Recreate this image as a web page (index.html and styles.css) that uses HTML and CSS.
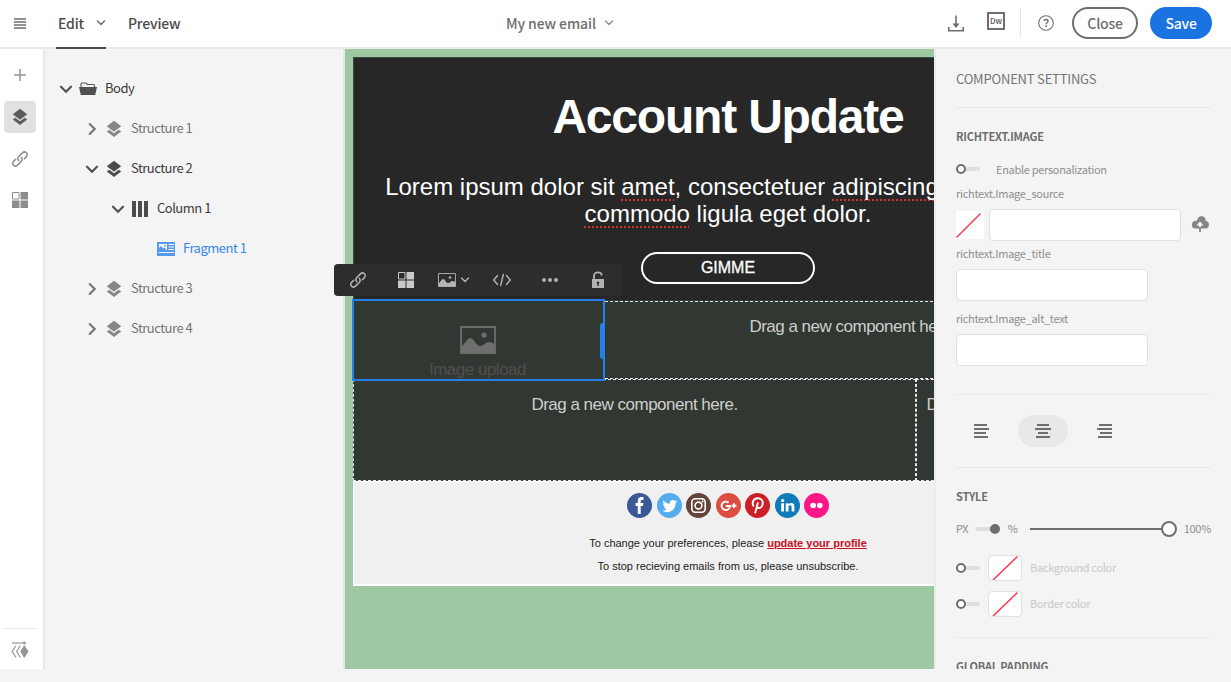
FILE: index.html
```html
<!DOCTYPE html>
<html lang="en">
<head>
<meta charset="utf-8">
<title>My new email</title>
<link rel="stylesheet" href="styles.css">
</head>
<body>
<svg class="defs" aria-hidden="true">
  <symbol id="layers" viewBox="0 0 16 18"><path d="M8 0.8 15.2 6.3 8 11.8 0.8 6.3zM8 13.3 12.8 9.7 15.2 11.6 8 17 0.8 11.6 3.2 9.7z"/></symbol>
  <symbol id="down" viewBox="0 0 14 14"><path d="M2 4.700 7 9.700l5-5" fill="none" stroke="currentColor" stroke-width="2.200" stroke-linecap="round"/></symbol>
  <symbol id="right" viewBox="0 0 14 14"><path d="M4.700 2 9.700 7l-5 5" fill="none" stroke="currentColor" stroke-width="2.100" stroke-linecap="round"/></symbol>
  <symbol id="link" viewBox="0 0 18 18"><g fill="none" stroke="currentColor" stroke-width="1.500" stroke-linecap="round"><path d="M7.800 10.800C6.200 9 6.500 7.800 7.800 6.500L11.200 3.100C12.600 1.700 14.400 1.700 15.500 2.800S16.500 5.600 15.200 6.900L13.300 8.800"/><path d="M10.200 7.200C11.800 9 11.500 10.200 10.200 11.500L6.800 14.900C5.400 16.300 3.600 16.300 2.500 15.200S1.500 12.400 2.800 11.100L4.700 9.200"/></g></symbol>
  <symbol id="grid" viewBox="0 0 18 18"><path d="M9.500 1H17v7.500H9.500zM1 9.500h7.500V17H1zM9.500 9.500H17V17H9.500z"/><path d="M1.500 1.500h6.500v6.500h-6.500z" fill="none" stroke="currentColor"/></symbol>
  <symbol id="picture" viewBox="0 0 36 28"><path d="M1 1h34v26H1z" fill="none" stroke="currentColor" stroke-width="1.800" stroke-linejoin="round"/><path d="M1 21C5 18 7 12 10.500 12S16 20 20 20s5-4 9-4 4 2 6 2v9H1z"/><circle cx="24" cy="9" r="2.600"/></symbol>
</svg>

<header class="topbar">
  <svg class="menu-icon" viewBox="0 0 12 11"><path d="M0 1h12M0 4h12M0 7h12M0 10h12" stroke="#6e6e6e" stroke-width="1.600"/></svg>
  <div class="tab tab-active"><span>Edit</span><svg viewBox="0 0 10 10"><path d="M1.500 3 5 6.500 8.500 3" fill="none" stroke="#6e6e6e" stroke-width="1.500" stroke-linecap="round"/></svg></div>
  <div class="tab">Preview</div>
  <div class="doc-title"><span>My new email</span><svg viewBox="0 0 10 10"><path d="M1.500 3 5 6.500 8.500 3" fill="none" stroke="#8e8e8e" stroke-width="1.400" stroke-linecap="round"/></svg></div>
  <svg class="download" viewBox="0 0 16 17"><path d="M8 .5v10M.8 12v3.800h14.400V12" fill="none" stroke="#6e6e6e" stroke-width="1.600"/><path d="M4.500 8.500h7L8 13z" fill="#6e6e6e"/></svg>
  <div class="dw">Dw</div>
  <div class="separator"></div>
  <svg class="help" viewBox="0 0 16 16"><circle cx="8" cy="8" r="7.300" fill="none" stroke="#6e6e6e" stroke-width="1.100"/><path d="M5.900 6.200C6.100 5 7 4.500 8 4.500c1.200 0 2 .7 2 1.700 0 1.500-1.900 1.500-1.900 3" fill="none" stroke="#6e6e6e" stroke-width="1.400"/><circle cx="8.100" cy="11.200" r=".95" fill="#6e6e6e"/></svg>
  <div class="button">Close</div>
  <div class="button button-primary">Save</div>
</header>

<main class="workspace">
  <nav class="rail">
    <div class="rail-item"><svg viewBox="0 0 18 18"><path d="M9 3v12M3 9h12" stroke="#959595" stroke-width="1.500"/></svg></div>
    <div class="rail-item rail-active"><svg viewBox="0 0 16 18"><use href="#layers"/></svg></div>
    <div class="rail-item"><svg><use href="#link"/></svg></div>
    <div class="rail-item rail-grid"><svg><use href="#grid"/></svg></div>
    <div class="rail-bottom"><svg viewBox="0 0 18 18"><path d="M1 2h12" stroke="#959595" stroke-width="1.200"/><path d="M12.500 0l3 2-3 2zM13.300 4 17.500 10.500 13.300 17 9.300 10.500z"/><path d="M5 4.500 1.200 10.500 5 16.500M9.300 4.500 5.700 10.500 9.300 16.500" fill="none" stroke="#959595" stroke-width="1.200"/></svg></div>
  </nav>

  <aside class="tree">
    <div class="node"><svg class="chev"><use href="#down"/></svg><svg class="folder" viewBox="0 0 18 14"><path d="M2 5V2q0-1 1-1h4l1.500 1.500h6q1 0 1 1V5" fill="none" stroke="#555" stroke-width="1.100"/><path d="M0 5h18l-1.800 8H1.800z" fill="#505050"/></svg><span>Body</span></div>
    <div class="node level-1 muted"><svg class="chev"><use href="#right"/></svg><svg class="icon"><use href="#layers"/></svg><span>Structure 1</span></div>
    <div class="node level-1"><svg class="chev"><use href="#down"/></svg><svg class="icon"><use href="#layers"/></svg><span>Structure 2</span></div>
    <div class="node level-2"><svg class="chev"><use href="#down"/></svg><svg class="icon" viewBox="0 0 16 18"><path d="M0 1h4v16H0zM6 1h4v16H6zM12 1h4v16h-4z"/></svg><span>Column 1</span></div>
    <div class="node level-3"><svg class="fragment" viewBox="0 0 18 14"><path d="M0 0h18v14H0z" fill="#569bee"/><path d="M2 2h8v6H2zM11.500 2H17v1h-5.500zM11.500 4.500H17v1h-5.500zM11.500 7H17v1h-5.500zM2 10h15v1H2z" fill="#f4f4f4"/><path d="M2 8V6l2-2 2 2.500 1-1 2 1.500v1z" fill="#569bee"/><circle cx="8" cy="3.800" r=".9" fill="#569bee"/></svg><span>Fragment 1</span></div>
    <div class="node level-1 muted"><svg class="chev"><use href="#right"/></svg><svg class="icon"><use href="#layers"/></svg><span>Structure 3</span></div>
    <div class="node level-1 muted"><svg class="chev"><use href="#right"/></svg><svg class="icon"><use href="#layers"/></svg><span>Structure 4</span></div>
  </aside>

  <section class="canvas">
    <div class="email">
      <div class="hero">
        <h1>Account Update</h1>
        <p><span class="line">Lorem ipsum dolor sit <u>amet</u>, consectetuer <u>adipiscing</u> elit. Aenean</span><br><u>commodo</u> ligula eget dolor.</p>
        <div class="cta">GIMME</div>
      </div>
      <div class="row row-first">
        <div class="cell selected"><svg><use href="#picture"/></svg><span>Image upload</span><div class="handle"></div></div>
        <div class="cell drop">Drag a new component here.</div>
      </div>
      <div class="row row-second">
        <div class="cell drop wide">Drag a new component here.</div>
        <div class="cell drop">Drag a new component<br>here.</div>
      </div>
      <footer class="footer">
        <div class="social">
          <svg viewBox="0 0 25 25"><circle cx="12.500" cy="12.500" r="12.500" fill="#3b5998"/><path d="M10.800 21v-8H8.500v-3.100h2.300V7.800c0-2.600 1.500-3.800 3.700-3.800l2 .1v2.800h-1.400c-1.100 0-1.400.5-1.400 1.300v1.700h2.700l-.4 3.100h-2.300v8z" fill="#fff"/></svg>
          <svg viewBox="0 0 25 25"><circle cx="12.500" cy="12.500" r="12.500" fill="#55acee"/><path d="M5.500 17.600c2 .1 3.300-.4 4.500-1.300-1.500-.1-2.400-1-2.800-2.100h1.300c-1.500-.4-2.400-1.600-2.400-3l1.300.4c-1.400-1.100-1.600-2.600-.8-4 1.700 2 3.600 3 6.200 3.200-.4-2.200 1-3.700 2.900-3.700.9 0 1.600.4 2.200 1l1.800-.7c-.2.700-.6 1.200-1.200 1.600l1.600-.4-1.500 1.500c.1 5.500-4 9.100-8.400 9.100-1.800 0-3.500-.7-4.700-1.600z" fill="#fff"/></svg>
          <svg viewBox="0 0 25 25"><circle cx="12.500" cy="12.500" r="12.500" fill="#64443a"/><g fill="none" stroke="#fff" stroke-width="1.600"><rect x="5.800" y="5.800" width="13.400" height="13.400" rx="3.500"/><circle cx="12.500" cy="12.500" r="3.400"/></g><circle cx="16.600" cy="8.500" r=".9" fill="#fff"/></svg>
          <svg viewBox="0 0 25 25"><circle cx="12.500" cy="12.500" r="12.500" fill="#dc4e41"/><path d="M12.600 9.700A4.200 4.200 0 1 0 14 13H9.800M15.600 12.700h4.800M18 10.300v4.800" fill="none" stroke="#fff" stroke-width="1.900"/></svg>
          <svg viewBox="0 0 25 25"><circle cx="12.500" cy="12.500" r="12.500" fill="#cb2027"/><path d="M8.700 13.400C6.300 9.500 8.500 5.300 12.800 5.300c3.100 0 5 2 5 4.500 0 3.100-1.700 5.200-4 5.200-1.300 0-2-.6-2.300-1.400M13 9.300 10.100 20.300" fill="none" stroke="#fff" stroke-width="1.900"/></svg>
          <svg viewBox="0 0 25 25"><circle cx="12.500" cy="12.500" r="12.500" fill="#0f7bb9"/><circle cx="7.600" cy="7.600" r="1.600" fill="#fff"/><path d="M6.200 10.200H9v8.300H6.200zM10.700 10.200h2.700v1.200c.5-.9 1.400-1.500 2.700-1.500 2.500 0 3.300 1.600 3.300 4.100v4.500h-2.800v-4c0-1.200-.2-2.200-1.400-2.200s-1.700.9-1.700 2.200v4h-2.800z" fill="#fff"/></svg>
          <svg viewBox="0 0 25 25"><circle cx="12.500" cy="12.500" r="12.500" fill="#ff1588"/><circle cx="9.200" cy="12.500" r="2.800" fill="#fff"/><circle cx="15.800" cy="12.500" r="2.800" fill="#fff"/></svg>
        </div>
        <p class="note-a">To change your preferences, please <a>update your profile</a></p>
        <p class="note-b">To stop recieving emails from us, please unsubscribe.</p>
      </footer>
    </div>
  </section>

  <aside class="settings">
    <h2>COMPONENT SETTINGS</h2>
    <section class="image-settings">
      <h3>RICHTEXT.IMAGE</h3>
      <div class="personalization"><i class="toggle"></i><span>Enable personalization</span></div>
      <label>richtext.Image_source</label>
      <div class="source"><svg class="swatch" viewBox="0 0 28 28"><path d="M.5 26.500 24.500 2.500" stroke="#f8384d" stroke-width="1.500"/></svg><div class="input"></div><svg class="cloud" viewBox="0 0 18 16"><path d="M4 12.500a3.800 3.800 0 0 1-.4-7.400C4.500 4.600 5.200 4.700 6 4.900 6.300 2 8 .3 10.400.3c2.700 0 4.500 2 4.300 4.800 1.900 0 3.300 1.600 3.300 3.600s-1.400 3.800-3.500 3.800z"/><path d="M9 5.300 12.500 9.500H10v3H8v-3H5.500z" fill="#f4f4f4"/><path d="M9 16v-5" stroke="#858585" stroke-width="1.800"/></svg></div>
      <label>richtext.Image_title</label>
      <div class="input"></div>
      <label class="alt">richtext.Image_alt_text</label>
      <div class="input"></div>
    </section>
    <section class="align">
      <div><svg viewBox="0 0 16 14"><path d="M0 1h13M0 5h15M0 9h12M0 13h14"/></svg></div>
      <div class="chosen"><svg viewBox="0 0 16 14"><path d="M2 1h12M0 5h16M3 9h10M1 13h14"/></svg></div>
      <div><svg viewBox="0 0 16 14"><path d="M2 1h13M0 5h15M3 9h12M1 13h14"/></svg></div>
    </section>
    <section class="style-settings">
      <h3>STYLE</h3>
      <div class="width-row"><span class="px">PX</span><i class="toggle toggle-on"></i><span class="pct">%</span><div class="slider"><i></i></div><span class="value">100%</span></div>
      <div class="color-row"><i class="toggle"></i><svg class="well" viewBox="0 0 32 24"><path d="M4 24 28.500 .5" stroke="#f8384d" stroke-width="1.500"/></svg><span>Background color</span></div>
      <div class="color-row"><i class="toggle"></i><svg class="well" viewBox="0 0 32 24"><path d="M4 24 28.500 .5" stroke="#f8384d" stroke-width="1.500"/></svg><span>Border color</span></div>
    </section>
    <section class="padding-settings"><h3>GLOBAL PADDING</h3></section>
  </aside>

  <div class="toolbar">
    <div><svg><use href="#link"/></svg></div>
    <div class="bright"><svg><use href="#grid"/></svg></div>
    <div class="image-tool"><svg viewBox="0 0 36 28"><use href="#picture"/></svg><svg class="mini" viewBox="0 0 10 10"><path d="M1.500 3 5 6.500 8.500 3" fill="none" stroke="#b3b3b3" stroke-width="1.400" stroke-linecap="round"/></svg></div>
    <div><svg viewBox="0 0 18 18"><path d="M4.500 4.500.8 9l3.700 4.500M13.500 4.500 17.200 9l-3.700 4.500M10.300 3.500 7.700 14.500" fill="none" stroke="#b3b3b3" stroke-width="1.400" stroke-linecap="round"/></svg></div>
    <div><svg viewBox="0 0 18 18"><circle cx="3" cy="9" r="2"/><circle cx="9" cy="9" r="2"/><circle cx="15" cy="9" r="2"/></svg></div>
    <div><svg viewBox="0 0 18 18"><path d="M3 8h12v9H3z"/><path d="M5 8V5C5 2.800 6.500 1.300 8.800 1.300S12.600 2.800 12.600 4.600" fill="none" stroke="#b3b3b3" stroke-width="1.800"/><path d="M9 12.500v2.500" stroke="#2d2d2d" stroke-width="1.300"/><circle cx="9" cy="11.800" r="1.300" fill="#2d2d2d"/></svg></div>
  </div>
</main>
</body>
</html>
```
FILE: styles.css
```css
*, *::before, *::after { box-sizing: border-box; }
body { margin: 0; width: 1231px; height: 682px; overflow: hidden; background: #f4f4f4; font-family: "Noto Sans CJK SC", "Open Sans", sans-serif; color: #4b4b4b; }
svg { display: block; flex: none; fill: currentColor; }
.defs { position: absolute; width: 0; height: 0; }
h1, h2, h3, p { margin: 0; }
span { white-space: nowrap; }

.topbar { height: 49px; border-bottom: 2px solid #eaeaea; background: #fff; display: flex; align-items: flex-start; font-size: 14px; font-weight: 500; line-height: 46px; letter-spacing: -.2px; }
.menu-icon { width: 12px; height: 11px; margin: 18px 36px 0 14px; }
.tab { height: 49px; margin-left: 17px; }
.tab-active { width: 50px; margin-left: -6px; padding-left: 2px; display: flex; justify-content: space-between; border-bottom: 2px solid #4b4b4b; }
.tab-active + .tab { margin-left: 22px; width: 53px; }
.tab svg { width: 10px; height: 10px; margin-top: 18px; }
.doc-title { margin-left: 325px; width: 108px; display: flex; justify-content: space-between; color: #6e6e6e; letter-spacing: -.1px; }
.doc-title svg { width: 10px; height: 10px; margin-top: 18px; }
.download { width: 16px; height: 17px; margin: 15px 0 0 334px; }
.dw { width: 18px; height: 18px; margin: 12px 0 0 23px; border: 2px solid #6e6e6e; font-size: 8px; line-height: 14px; text-align: center; color: #555; }
.separator { width: 1px; height: 28px; margin: 9px 17px 0 15px; background: #e4e4e4; }
.help { width: 16px; height: 16px; margin-top: 15px; }
.button { width: 66px; height: 32px; margin: 7px 0 0 18px; border: 2px solid #6e6e6e; border-radius: 16px; line-height: 28px; text-align: center; color: #6e6e6e; }
.button-primary { width: 62px; margin-left: 12px; border-color: #1b73e2; background: #1b73e2; color: #fff; }

.workspace { position: relative; display: flex; height: 620px; }
.rail { width: 45px; padding: 10px 0 0 4px; display: flex; flex-direction: column; gap: 10px; background: #fff; border-right: 2px solid #e8e8e8; color: #8e8e8e; }
.rail-item { width: 32px; height: 32px; padding: 7px; border-radius: 4px; }
.rail-grid { padding-top: 6px; }
.rail-item svg { width: 18px; height: 18px; }
.rail-active { background: #e1e1e1; color: #5c5c5c; }
.rail-bottom { width: 32px; height: 41px; margin-top: auto; padding: 12px 7px; border-top: 1px solid #e8e8e8; color: #959595; }
.rail-bottom svg { width: 18px; height: 18px; }

.tree { width: 300px; padding: 20px 0 0 14px; border-right: 2px solid #e6e6e8; }
.node { height: 40px; display: flex; align-items: center; font-size: 13px; color: #3b3b3b; letter-spacing: -.5px; }
.node span { padding-bottom: 3px; }
.chev { width: 14px; height: 14px; color: #505050; }
.node .icon { width: 16px; height: 18px; margin: 0 9px 0 7px; color: #4c4c4c; }
.folder { width: 18px; height: 14px; margin: 0 8px 0 6px; }
.level-1 { padding-left: 26px; }
.level-2 { padding-left: 52px; }
.level-3 { padding-left: 98px; color: #3687e8; }
.muted, .muted .chev { color: #747474; }
.muted .icon { color: #868686; }
.fragment { width: 18px; height: 14px; margin-right: 8px; }

.canvas { width: 589px; padding: 8px; overflow: hidden; background: #9ec8a1; font-family: "Liberation Sans", Arial, sans-serif; }
.email { width: 750px; height: 529px; background: #fff; }
.hero { height: 243px; padding-top: 32px; background: #272727; border: 1px solid #3a4c3b; border-bottom: 0; color: #fff; text-align: center; }
.hero h1 { font-size: 48px; line-height: 54px; letter-spacing: -1.200px; }
.hero p { margin-top: 29px; font-size: 24px; line-height: 27px; }
.hero u { text-decoration: underline dotted #d23232 2px; text-underline-offset: 4px; text-decoration-skip-ink: none; }
.cta { width: 174px; height: 32px; margin: 25px auto 0; border: 2px solid #fff; border-radius: 16px; font-size: 16px; line-height: 27px; -webkit-text-stroke: .3px #fff; }
.row { display: flex; background: #313731; color: #cecece; font-size: 17px; letter-spacing: -.5px; text-align: center; }
.row-first { height: 79px; }
.row-second { height: 102px; }
.cell { flex: 1; }
.drop { border: 1px dashed #e8e8e8; padding-top: 15px; line-height: 20px; }
.row-first .drop { margin-top: 1px; padding-right: 2px; border-left: 0; }
.wide { flex: 0 0 563px; }
.selected { position: relative; flex: 0 0 253px; height: 82px; margin: -1px 0 0 -1px; border: 2px solid #2680eb; padding: 25px 2px 0 0; display: flex; flex-direction: column; align-items: center; color: #505050; line-height: 20px; }
.selected svg { width: 36px; height: 28px; margin-bottom: 6px; color: #6e6e6e; }
.handle { position: absolute; right: 0; top: 22px; width: 3px; height: 36px; border-radius: 3px 0 0 3px; background: #2680eb; }
.footer { height: 102px; margin: 1px 1px 0; padding-top: 11px; background: #f0f0f0; text-align: center; color: #222; font-size: 11px; line-height: 14px; }
.social { display: flex; justify-content: center; gap: 4.500px; }
.social svg { width: 25px; height: 25px; }
.note-a { margin-top: 18px; }
.note-b { margin-top: 9px; }
.footer a { color: #c8101e; font-weight: 700; text-decoration: underline; }

.settings { width: 297px; padding: 0 20px; overflow: hidden; border-left: 2px solid #ececec; color: #8e8e8e; font-size: 11px; line-height: 16px; letter-spacing: -.3px; }
.settings h2 { height: 59px; padding-top: 20px; font-size: 13px; font-weight: 400; line-height: 20px; letter-spacing: -.2px; color: #747474; border-bottom: 1px solid #e8e8e8; }
.settings h3 { font-size: 11px; font-weight: 700; line-height: 16px; letter-spacing: -.2px; color: #6e6e6e; }
.image-settings { height: 287px; padding-top: 20px; border-bottom: 1px solid #e8e8e8; }
.personalization { display: flex; align-items: center; margin-top: 17px; }
.personalization span { margin-left: 16px; padding-bottom: 1px; margin-bottom: -1px; }
.toggle { position: relative; width: 24px; height: 10px; display: block; flex: none; }
.toggle::before { content: ""; position: absolute; left: 0; top: 3px; width: 24px; height: 4px; border-radius: 2px; background: #dedede; }
.toggle::after { content: ""; position: absolute; left: 0; top: 0; width: 10px; height: 10px; border: 2px solid #6e6e6e; border-radius: 5px; background: #fff; }
.toggle-on::after { left: 14px; background: #6e6e6e; }
.settings label { display: block; margin: 8px 0; }
.input { width: 192px; height: 32px; border: 1px solid #e1e1e1; border-radius: 4px; background: #fff; }
.source { display: flex; align-items: center; }
.settings .source + label { margin-top: 4px; }
.settings .alt { margin-top: 9px; }
.swatch { width: 28px; height: 28px; margin-right: 5px; background: #fff; }
.cloud { width: 18px; height: 16px; margin: 0 0 2px 10px; color: #858585; }
.align { height: 73px; padding-top: 20px; display: flex; gap: 12px; border-bottom: 1px solid #e8e8e8; }
.align div { width: 50px; height: 32px; padding: 9px 17px; border-radius: 16px; }
.align .chosen { background: #e8e8e8; }
.align svg { width: 16px; height: 14px; stroke: #6e6e6e; stroke-width: 2; }
.align div:first-child { padding-left: 18px; }
.style-settings { height: 170px; padding-top: 20px; border-bottom: 1px solid #e8e8e8; }
.width-row { display: flex; align-items: center; height: 32px; margin-top: 9px; }
.width-row span { padding-bottom: 2px; }
.px { width: 21px; }
.pct { flex: none; width: 22px; margin-left: 8px; }
.slider { flex: none; width: 147px; height: 16px; margin-right: 7px; display: flex; align-items: center; justify-content: flex-end; background: linear-gradient(#6e6e6e, #6e6e6e) 0 7px / 133px 2px no-repeat; }
.slider i { width: 16px; height: 16px; border: 2px solid #6e6e6e; border-radius: 8px; background: #fff; }
.color-row { display: flex; align-items: center; height: 26px; margin-top: 10px; color: #c8c8c8; }
.color-row span { padding-bottom: 2px; }
.well { width: 34px; height: 26px; margin: 0 8px; border: 1px solid #e1e1e1; border-radius: 4px; background: #fff; }
.padding-settings { padding-top: 20px; }

.toolbar { position: absolute; left: 334px; top: 215px; width: 288px; height: 32px; display: flex; border-radius: 4px; background: #2d2d2d; color: #b3b3b3; }
.toolbar div { width: 48px; display: flex; align-items: center; justify-content: center; }
.toolbar svg { width: 18px; height: 18px; }
.toolbar .bright { color: #cacaca; }
.toolbar .image-tool { gap: 4px; padding-right: 1px; }
.toolbar .mini { width: 10px; height: 10px; }
```
